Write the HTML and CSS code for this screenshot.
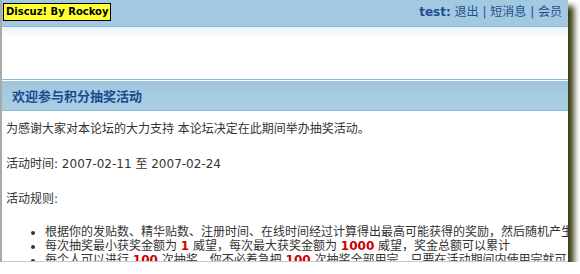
FILE: index.html
```html
<!DOCTYPE html>
<html lang="zh-CN">
<head>
    <meta charset="UTF-8">
    <title>积分抽奖活动</title>
    <link rel="stylesheet" href="styles.css">
</head>
<body>
    <div class="window">
        <div class="header">
            <span class="brand">Discuz! By Rockoy</span>
            <div class="userbar">
                <b>test:</b> <a href="#">退出</a> | <a href="#">短消息</a> | <a href="#">会员</a>
            </div>
        </div>
        <div class="banner"></div>
        <div class="titlebar">
            <h3>欢迎参与积分抽奖活动</h3>
        </div>
        <div class="content">
            <p class="intro">为感谢大家对本论坛的大力支持 本论坛决定在此期间举办抽奖活动。</p>
            <p class="date">活动时间: 2007-02-11 至 2007-02-24</p>
            <p class="rules">活动规则:</p>
            <ul>
                <li>根据你的发贴数、精华贴数、注册时间、在线时间经过计算得出最高可能获得的奖励，然后随机产生</li>
                <li>每次抽奖最小获奖金额为 <span class="num">1</span> 威望，每次最大获奖金额为 <span class="num">1000</span> 威望，奖金总额可以累计</li>
                <li>每个人可以进行 <span class="num">100</span> 次抽奖，你不必着急把 <span class="num">100</span> 次抽奖全部用完，只要在活动期间内使用完就可以</li>
            </ul>
        </div>
    </div>
</body>
</html>
```

FILE: styles.css
```css
body {
    margin: 0;
    background: #fff;
    font-family: "DejaVu Sans", "Noto Sans CJK SC", sans-serif;
    font-size: 12px;
    color: #333;
}
.window {
    width: 566px;
    height: 261px;
    border-left: 2px solid #a9a9a9;
    border-bottom: 1px solid #c8c8c8;
    overflow: hidden;
    background: #fff;
    box-shadow: 6px 6px 6px #3a3a12;
}
.header {
    height: 26px;
    background: #a3c9e0;
    border-bottom: 1px solid #8db5cf;
    display: flex;
    justify-content: space-between;
    align-items: flex-start;
}
.brand {
    margin: 3px 0 0 1px;
    padding: 0 2px;
    height: 16px;
    line-height: 16px;
    background: #ffff33;
    border: 1px solid #000;
    color: #000;
    font-weight: bold;
    font-size: 10px;
}
.userbar {
    margin: 5px 6px 0 0;
    line-height: 14px;
    color: #1d4d8f;
}
.userbar a {
    color: #1d4d8f;
    text-decoration: none;
}
.banner {
    height: 52px;
    background: linear-gradient(#e6f1f9, #fff 10px);
}
.titlebar {
    border-top: 1px solid #8fb8d2;
    border-bottom: 1px solid #8fb8d2;
    padding-top: 1px;
    background: #fff;
}
.titlebar h3 {
    margin: 0;
    height: 29px;
    line-height: 29px;
    padding-left: 10px;
    background: linear-gradient(#9dc5dd, #a6cce2 50%, #a9cfe4);
    color: #1c4a91;
    font-family: "Noto Sans CJK SC", sans-serif;
    font-size: 13px;
    font-weight: bold;
}
.content {
    padding: 11px 4px 0;
}
.content p {
    margin: 0;
    line-height: 14px;
}
.date {
    padding-top: 21px;
}
.rules {
    padding-top: 21px;
}
ul {
    margin: 19px 0 0;
    padding-left: 39px;
    line-height: 14px;
    white-space: nowrap;
}
.num {
    color: #cc0000;
    font-weight: bold;
}
```
